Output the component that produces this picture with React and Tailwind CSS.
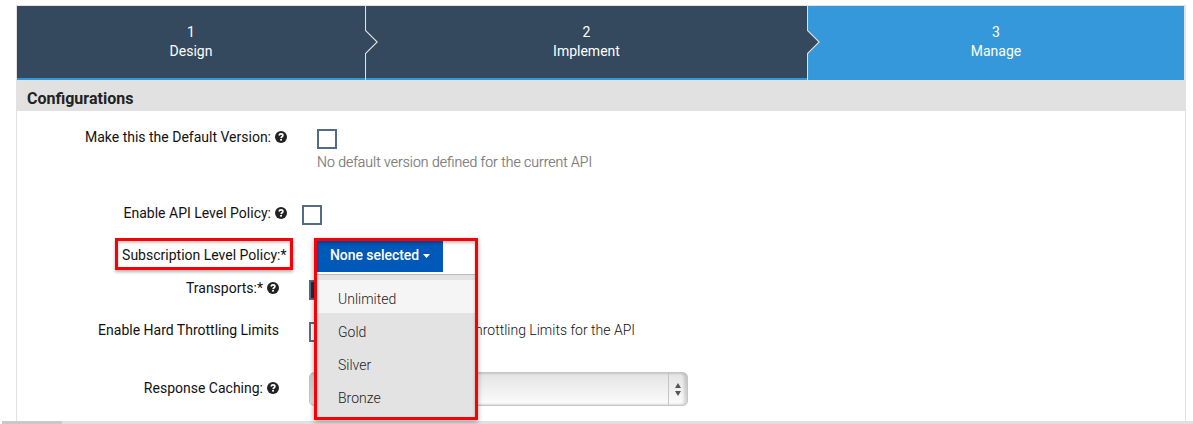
function Step({ number, label, className, arrow }) {
  return (
    <div className={`relative h-[74px] shrink-0 pt-[17px] text-center text-[14px] leading-[19px] text-white ${className}`}>
      <div>{number}</div>
      <div>{label}</div>
      {arrow && (
        <svg className="absolute -right-[13px] top-0 z-10" width="14" height="74" viewBox="0 0 14 74">
          <path d="M0 24.5 L1 24.5 L12.5 36 L1 47.5 L0 47.5Z" fill="#34495e" />
          <path d="M0.5 0 V24.5 L12.2 36 L0.5 47.5 V74" fill="none" stroke="#e2e2e2" strokeWidth="1.1" />
        </svg>
      )}
    </div>
  );
}

function Help() {
  return (
    <svg className="ml-1 shrink-0" width="12" height="12" viewBox="0 0 12 12">
      <circle cx="6" cy="6" r="6" fill="#222" />
      <path d="M4.1 4.5C4.3 3.2 5.1 2.8 6 2.8C7.1 2.8 7.9 3.5 7.9 4.4C7.9 5.7 6.2 5.7 6.1 7.1" fill="none" stroke="#fff" strokeWidth="1.7" />
      <rect x="5.1" y="8" width="1.9" height="1.6" fill="#fff" />
    </svg>
  );
}

function Label({ children, help, className }) {
  return (
    <div className={`flex h-5 shrink-0 items-center justify-end whitespace-nowrap ${className}`}>
      <span>{children}</span>
      {help && <Help />}
    </div>
  );
}

function Box({ className }) {
  return <div className={`size-5 shrink-0 border-2 border-[#526b87] ${className}`} />;
}

const tiers = ["Unlimited", "Gold", "Silver", "Bronze"];

export default function App() {
  return (
    <div className="flex h-[424px] w-[1193px] flex-col overflow-hidden bg-white pt-[5px] font-['Roboto','Liberation_Sans',sans-serif] text-[14px] leading-5 text-[#111]">
      <div className="ml-4 h-[416px] w-[1170px] border-x border-t border-[#e2e2e2]">
        <div className="flex bg-[#e2e2e2]">
          <Step number="1" label="Design" arrow className="w-[349px] border-b-2 border-[#3498db] bg-[#34495e] pr-px" />
          <Step number="2" label="Implement" arrow className="w-[442px] border-b-2 border-[#3498db] bg-[#34495e] pr-px" />
          <Step number="3" label="Manage" className="w-[376px] bg-[#3498db]" />
        </div>
        <h2 className="h-[31px] bg-[#e1e1e1] pl-2.5 pt-2 text-[16px] font-bold leading-[21px] text-[#222]">Configurations</h2>

        <div className="flex pt-4">
          <Label help className="w-[270px]">Make this the Default Version:</Label>
          <div className="ml-[30px] pt-0.5">
            <Box />
            <p className="pt-[3px] text-[#777] font-light [-webkit-text-stroke:0.2px_#777]">No default version defined for the current API</p>
          </div>
        </div>

        <div className="flex items-start pt-[31px]">
          <Label help className="w-[270px]">Enable API Level Policy:</Label>
          <Box className="ml-[15px] mt-[2px]" />
        </div>

        <div className="relative mt-[13px] flex h-8">
          <div className="ml-[98px] flex w-[178px] items-center justify-end whitespace-nowrap border-[3px] border-[#f90006] pr-[3.5px] pt-px shadow-[0_2px_3px_rgba(0,0,0,0.3),inset_0_2px_3px_rgba(0,0,0,0.2)]">
            Subscription Level Policy:*
          </div>
          <div className="absolute left-[297px] top-0 z-10 h-[182px] w-[164px] border-[3px] border-[#f90006] bg-white shadow-[0_2px_5px_rgba(0,0,0,0.35)]">
            <button className="flex h-[31px] w-[126px] items-center bg-[#0058b8] pb-[3px] pl-[13px] font-medium tracking-[-0.06px] text-white">
              None selected
              <svg className="ml-1 mt-0.5" width="7" height="4" viewBox="0 0 7 4"><path d="M0 0H7L3.5 4Z" fill="#fff" /></svg>
            </button>
            <ul className="mt-0.5 h-[143px] border-t border-[#bdbdbd] bg-[#e3e3e3] pt-[5px] font-light text-[#222]">
              {tiers.map((tier, i) => (
                <li key={tier} className={`h-[33px] pl-[21px] pt-[9px] leading-5 ${i === 0 ? "bg-[#f5f5f5]" : ""}`}>{tier}</li>
              ))}
            </ul>
            <div className="pointer-events-none absolute inset-0 shadow-[inset_0_2px_3px_rgba(0,0,0,0.25)]" />
          </div>
        </div>

        <div className="flex items-start pt-[8px]">
          <Label help className="w-[262px]">Transports:*</Label>
          <Box className="ml-[30px] mt-[2px] bg-[#262d35]" />
        </div>

        <div className="flex items-start pt-5">
          <Label className="w-[262px]">Enable Hard Throttling Limits</Label>
          <Box className="ml-[30px] mt-[2px]" />
          <div className="w-[306px] text-right font-light">Throttling Limits for the API</div>
        </div>

        <div className="flex items-start pt-[30px]">
          <Label help className="mt-[6px] w-[262px]">Response Caching:</Label>
          <div className="ml-[30px] flex h-[34px] w-[379px] justify-end rounded-[5px] border border-[#c5c5c5] bg-linear-to-b from-[#e4e4e4] to-[#fcfcfc] shadow-[inset_-3px_0_3px_rgba(0,0,0,0.15),inset_3px_0_3px_rgba(0,0,0,0.12)]">
            <div className="flex w-[19px] items-center border-l border-[#c5c5c5] pl-[5px]">
              <svg width="8" height="13" viewBox="0 0 8 13"><path d="M4 0L7 5H1ZM4 13L1 8H7Z" fill="#555" /></svg>
            </div>
          </div>
        </div>
      </div>
      <div className="ml-0.5 h-[3px] bg-[#e1e1e1]">
        <div className="h-full w-[60px] bg-[#c9c9c9]" />
      </div>
    </div>
  );
}
